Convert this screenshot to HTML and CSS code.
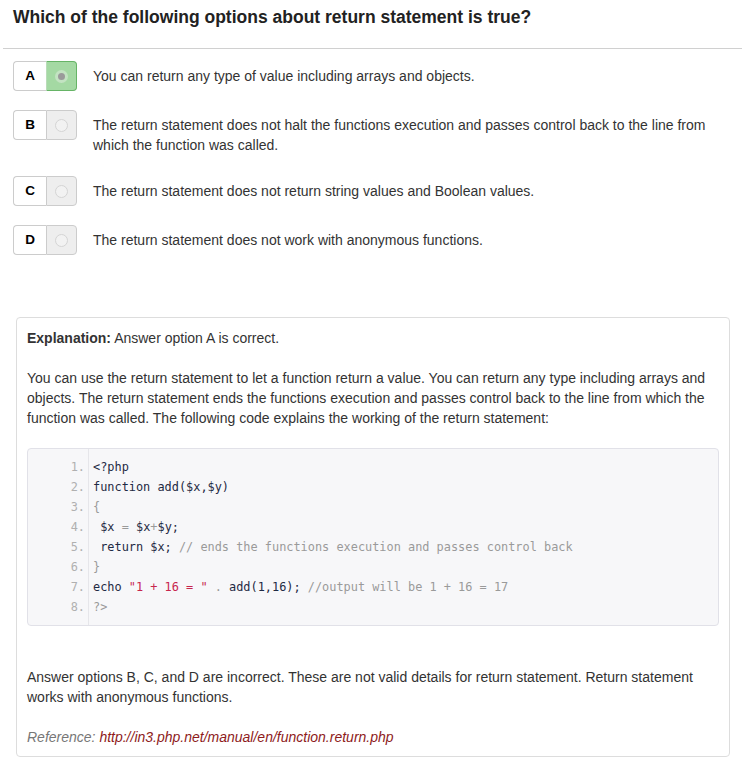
FILE: index.html
```html
<!DOCTYPE html>
<html lang="en">
<head>
<meta charset="utf-8">
<title>Question</title>
<link rel="stylesheet" href="styles.css">
</head>
<body>
<div class="page">
  <h2 class="title">Which of the following options about return statement is true?</h2>
  <div class="rule"></div>
  <ul class="options">
    <li class="option">
      <span class="btn"><span class="letter">A</span><span class="radio selected"><span class="dot"></span></span></span>
      <span class="opt-text">You can return any type of value including arrays and objects.</span>
    </li>
    <li class="option">
      <span class="btn"><span class="letter">B</span><span class="radio"><span class="dot"></span></span></span>
      <span class="opt-text">The return statement does not halt the functions execution and passes control back to the line from which the function was called.</span>
    </li>
    <li class="option">
      <span class="btn"><span class="letter">C</span><span class="radio"><span class="dot"></span></span></span>
      <span class="opt-text">The return statement does not return string values and Boolean values.</span>
    </li>
    <li class="option">
      <span class="btn"><span class="letter">D</span><span class="radio"><span class="dot"></span></span></span>
      <span class="opt-text">The return statement does not work with anonymous functions.</span>
    </li>
  </ul>
  <div class="panel">
    <p class="para"><strong>Explanation:</strong> Answer option A is correct.</p>
    <p class="para">You can use the return statement to let a function return a value. You can return any type including arrays and objects. The return statement ends the functions execution and passes control back to the line from which the function was called. The following code explains the working of the return statement:</p>
    <div class="code">
      <ol class="gutter">
        <li>1.</li><li>2.</li><li>3.</li><li>4.</li><li>5.</li><li>6.</li><li>7.</li><li>8.</li>
      </ol>
      <div class="lines">
<div class="ln"><span class="pln">&lt;?php</span></div>
<div class="ln"><span class="pln">function add($x,$y)</span></div>
<div class="ln"><span class="pun">{</span></div>
<div class="ln"><span class="pln"> $x </span><span class="pun">=</span><span class="pln"> $x</span><span class="pun">+</span><span class="pln">$y;</span></div>
<div class="ln"><span class="pln"> return $x; </span><span class="com">// ends the functions execution and passes control back</span></div>
<div class="ln"><span class="pun">}</span></div>
<div class="ln"><span class="pln">echo </span><span class="str">"1 + 16 = "</span><span class="pun"> . </span><span class="pln">add(1,16); </span><span class="com">//output will be 1 + 16 = 17</span></div>
<div class="ln"><span class="pun">?&gt;</span></div>
      </div>
    </div>
    <p class="para after">Answer options B, C, and D are incorrect. These are not valid details for return statement. Return statement works with anonymous functions.</p>
    <p class="para ref">Reference: <a class="link" href="#">http://in3.php.net/manual/en/function.return.php</a></p>
  </div>
</div>
</body>
</html>
```
FILE: styles.css
```css
html, body {
  margin: 0;
  padding: 0;
  background: #fff;
}
.page {
  font-family: "Liberation Sans", Arial, sans-serif;
  color: #333;
  font-size: 14px;
  line-height: 20px;
}
.title {
  margin: 0;
  padding: 7px 13px 0;
  font-size: 17.5px;
  line-height: 20px;
  font-weight: bold;
  color: #222;
  height: 48px;
  box-sizing: border-box;
}
.rule {
  margin: 0 10px 0 3px;
  border-top: 1px solid #d0d0d0;
}
.options {
  list-style: none;
  margin: 12px 0 0;
  padding: 0 0 0 13px;
}
.option {
  display: flex;
  align-items: flex-start;
  margin-bottom: 19px;
}
.btn {
  display: flex;
  flex: none;
  height: 30px;
}
.letter {
  box-sizing: border-box;
  width: 33px;
  height: 30px;
  border: 1px solid #ccc;
  border-right: none;
  border-radius: 4px 0 0 4px;
  background: #fff;
  color: #000;
  font-weight: bold;
  font-size: 13.5px;
  display: flex;
  align-items: center;
  justify-content: center;
}
.radio {
  box-sizing: border-box;
  width: 31px;
  height: 30px;
  border: 1px solid #ccc;
  border-radius: 0 4px 4px 0;
  background: #eee;
  display: flex;
  align-items: center;
  justify-content: center;
}
.dot {
  box-sizing: border-box;
  width: 13px;
  height: 13px;
  border-radius: 50%;
  border: 1px solid #d4d4d4;
  background: #f2f2f2;
}
.radio.selected {
  background: #a4d9a3;
  border-color: #66b466;
  border-left-color: #b9dcb8;
}
.radio.selected .dot {
  border: 3px solid #c3e3c2;
  background: #9a9a9a;
}
.opt-text {
  margin-left: 16px;
  padding: 5px 20px 2px 0;
  color: #333;
}
.panel {
  margin: 62px 22px 0 16px;
  border: 1px solid #ddd;
  border-radius: 4px;
  padding: 10px 10px 9px;
}
.para {
  margin: 0 0 20px;
}
.para strong {
  color: #333;
}
.code {
  display: flex;
  background: #f7f7f9;
  border: 1px solid #e1e1e8;
  border-radius: 4px;
  font-family: "DejaVu Sans Mono", "Liberation Mono", monospace;
  font-size: 11.9px;
  line-height: 20px;
  margin-bottom: 41px;
}
.gutter {
  list-style: none;
  margin: 0;
  padding: 8px 3px 8px 0;
  width: 57px;
  text-align: right;
  color: #b0b0b0;
  border-right: 1px solid #e6e6ea;
}
.lines {
  padding: 8px 0 8px 4px;
}
.ln {
  white-space: pre;
  height: 20px;
}
.pln { color: #1f2a44; }
.pun { color: #9a9a9a; }
.com { color: #9a9a9a; }
.str { color: #c7254e; }
.after {
  margin-bottom: 20px;
}
.ref {
  margin: 0;
  font-style: italic;
  color: #777;
}
.link {
  color: #8e1b1b;
  text-decoration: none;
}
```
